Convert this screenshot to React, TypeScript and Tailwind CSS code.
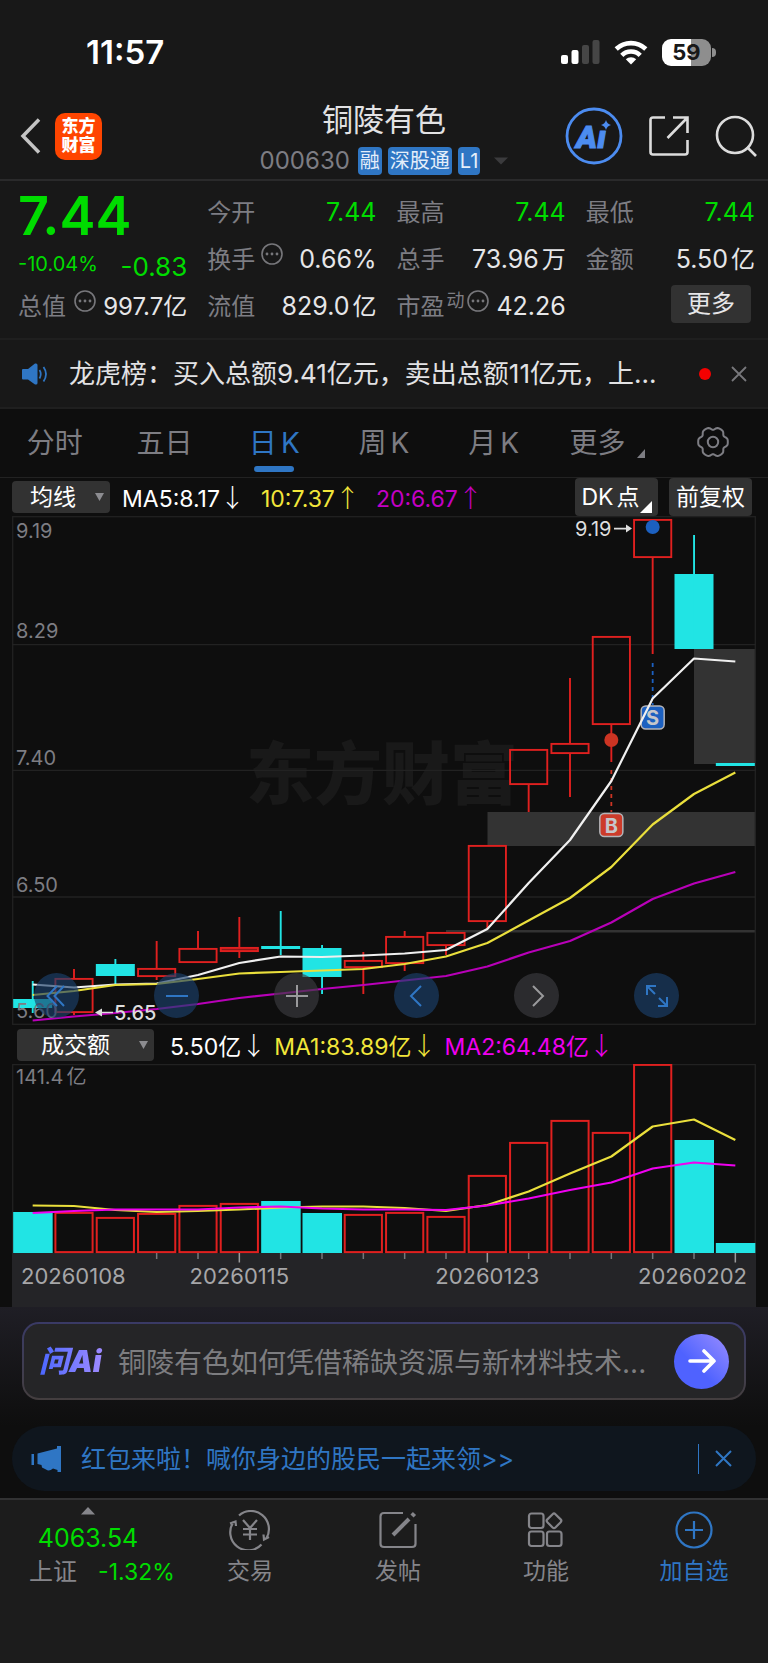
import React from "react";

const UP = "#e0201f";
const DOWN = "#21e4e4";

// Chart space: 744 units wide, 18 equal slots.
const SLOT = 744 / 18;
const cx = (i: number) => SLOT * i + SLOT / 2;
const BODY = 39;

type Candle = { up: boolean; top: number; bottom: number; high: number; low: number };

const candles: Candle[] = [
  { up: false, top: 483, bottom: 492, high: 465, low: 497 },
  { up: true, top: 462, bottom: 497, high: 453, low: 499 },
  { up: false, top: 448, bottom: 460, high: 443, low: 468 },
  { up: true, top: 452, bottom: 461, high: 425, low: 464 },
  { up: true, top: 432, bottom: 447, high: 415, low: 447 },
  { up: true, top: 431, bottom: 436, high: 401, low: 442 },
  { up: false, top: 430, bottom: 433, high: 395, low: 439 },
  { up: false, top: 432, bottom: 461, high: 429, low: 478 },
  { up: true, top: 444, bottom: 452, high: 436, low: 478 },
  { up: true, top: 420, bottom: 448, high: 415, low: 455 },
  { up: true, top: 416, bottom: 430, high: 416, low: 439 },
  { up: true, top: 329, bottom: 406, high: 329, low: 413 },
  { up: true, top: 233, bottom: 269, high: 233, low: 296 },
  { up: true, top: 227, bottom: 238, high: 162, low: 281 },
  { up: true, top: 120, bottom: 209, high: 120, low: 246 },
  { up: true, top: 3, bottom: 42, high: 3, low: 138 },
  { up: false, top: 58, bottom: 133, high: 19, low: 133 },
  { up: false, top: 247, bottom: 250, high: 247, low: 250 },
];

const ma5 = [468.5, 471.5, 468.5, 467.5, 459, 447, 440.5, 441, 439.5, 437.5, 434, 413, 367, 324, 265, 182.5, 142.5, 145.5];
const ma10 = [479, 475, 469, 468, 463, 457.5, 456, 454.5, 453, 448, 440.5, 427, 404.5, 382, 351, 308.5, 278, 256.5];
const ma20 = [504.5, 500.5, 497, 493, 488, 482, 477.5, 473, 469, 464.5, 460, 450.5, 436.5, 425, 406.5, 383, 367.5, 356];

const volumes: { up: boolean; top: number }[] = [
  { up: false, top: 148 },
  { up: true, top: 148 },
  { up: true, top: 153 },
  { up: true, top: 149 },
  { up: true, top: 141 },
  { up: true, top: 139 },
  { up: false, top: 137 },
  { up: false, top: 149 },
  { up: true, top: 150 },
  { up: true, top: 148 },
  { up: true, top: 152 },
  { up: true, top: 111 },
  { up: true, top: 78 },
  { up: true, top: 56 },
  { up: true, top: 68 },
  { up: true, top: 0 },
  { up: false, top: 76 },
  { up: false, top: 179 },
];
const volMa1 = [141.5, 142, 146, 148, 147, 145.5, 143.5, 142.5, 142.5, 144, 147, 141, 127.5, 109.5, 92.5, 62.5, 55.5, 76];
const volMa2 = [149, 147, 145.5, 145.5, 145.5, 143.5, 142.5, 144.5, 145.5, 145.5, 146, 141.5, 134.5, 126, 118.5, 104.5, 98.5, 101.5];

const toPoints = (ys: number[]) => ys.map((y, i) => `${cx(i)},${y}`).join(" ");

// Six-lobed outline of the settings icon, centred on (16, 16).
const gearPoints = Array.from({ length: 90 }, (_, k) => {
  const a = (k * Math.PI) / 45;
  const r = 13.9 + 1.3 * Math.cos(6 * a) - 0.4 * Math.cos(12 * a);
  return `${(16 + r * Math.cos(a)).toFixed(2)},${(16 + r * Math.sin(a)).toFixed(2)}`;
}).join(" ");

function StatusBar() {
  return (
    <div className="flex h-[102px] items-center justify-between pt-[2px] pl-[86px] pr-[52px] text-white">
      <div className="text-[33px] leading-10 font-semibold">11:57</div>
      <div className="flex items-center gap-[14px]">
        <svg width="39" height="25" viewBox="0 0 39 25" aria-hidden="true">
          <rect x="0" y="15" width="7" height="9" rx="2" fill="#fff" />
          <rect x="10.500" y="10" width="7" height="14" rx="2" fill="#fff" />
          <rect x="21" y="5" width="7" height="19" rx="2" fill="#464646" />
          <rect x="31.500" y="0" width="7" height="24" rx="2" fill="#464646" />
        </svg>
        <svg width="34" height="25" viewBox="0 0 34 25" aria-hidden="true">
          <path d="M17 24.500 L11.800 19.300 A7.400 7.400 0 0 1 22.200 19.300 Z" fill="#fff" />
          <path d="M7.800 15.300 A13 13 0 0 1 26.200 15.300" fill="none" stroke="#fff" strokeWidth="4.600" />
          <path d="M2.200 9 A21.500 21.500 0 0 1 31.800 9" fill="none" stroke="#fff" strokeWidth="4.600" />
        </svg>
        <div className="flex items-center gap-px">
          <div className="flex h-[27px] w-[49px] items-center justify-center rounded-[9px] bg-linear-to-r from-white from-59% to-[#8e8e8e] to-59% text-[22px] leading-none font-bold text-[#181818]">
            59
          </div>
          <div className="h-[9px] w-1 rounded-r-full bg-[#8e8e8e]" />
        </div>
      </div>
    </div>
  );
}

function Header() {
  return (
    <header className="grid h-[79px] grid-cols-[1fr_auto_1fr] items-start border-b-2 border-[#2a2a2b] px-[11px]">
      <div className="flex h-[68px] items-center gap-[14px] pl-[9px]">
        <button aria-label="返回">
          <svg width="21" height="36" viewBox="0 0 21 36" fill="none" stroke="#c4c4c4" strokeWidth="3.500">
            <path d="M19 1.500 L3 18 L19 34.500" />
          </svg>
        </button>
        <div className="flex h-[47px] w-[47px] flex-col items-center justify-center rounded-[10px] bg-[#ff4500] text-[17px] leading-[19px] font-black text-white">
          <span>东方</span>
          <span>财富</span>
        </div>
      </div>
      <div className="flex flex-col items-center">
        <h1 className="text-[31px] leading-9 font-normal text-[#e2e2e4]">铜陵有色</h1>
        <div className="mt-[9px] flex h-7 items-center gap-[6px] text-[20px] text-[#e4eefa]">
          <span className="mr-[2px] text-[24px] leading-none text-[#7d7d83]">000630</span>
          <span className="flex h-7 items-center rounded-[4px] bg-[#2f76c4] px-[2px]">融</span>
          <span className="flex h-7 items-center rounded-[4px] bg-[#2f76c4] px-[2px]">深股通</span>
          <span className="flex h-7 items-center rounded-[4px] bg-[#2f76c4] px-[2px]">L1</span>
          <svg className="ml-2" width="14" height="8" viewBox="0 0 14 8" aria-hidden="true">
            <path d="M0 0.500 H14 L7 7.500 Z" fill="#3b3b3d" />
          </svg>
        </div>
      </div>
      <div className="flex h-[68px] items-center justify-end gap-[26px]">
        <button aria-label="AI 助手">
          <svg width="58" height="58" viewBox="0 0 58 58">
            <circle cx="29" cy="29" r="27" fill="none" stroke="#4c8cf0" strokeWidth="2.800" />
            <text x="11" y="40.500" fontSize="32" fontWeight="900" fontStyle="italic" fill="#4c8cf0" stroke="#4c8cf0" strokeWidth="1" className="font-['Roboto',sans-serif]">
              Aı
            </text>
            <path d="M41 13 Q42 17 46 18 Q42 19 41 23 Q40 19 36 18 Q40 17 41 13 Z" fill="#4c8cf0" stroke="#181818" strokeWidth="1.500" paintOrder="stroke" />
          </svg>
        </button>
        <button aria-label="分享">
          <svg width="40" height="40" viewBox="0 0 40 40" fill="none" stroke="#dcdcdc" strokeWidth="2.600">
            <path d="M16 1.500 H4 Q1.500 1.500 1.500 4 V36 Q1.500 38.500 4 38.500 H36 Q38.500 38.500 38.500 36 V24" />
            <path d="M24 1.500 H38.500 V17 M38 2 L18.500 22" />
          </svg>
        </button>
        <button aria-label="搜索">
          <svg width="42" height="42" viewBox="0 0 42 42" fill="none" stroke="#dcdcdc" strokeWidth="2.600">
            <circle cx="20" cy="20" r="18" />
            <path d="M32 32 L41 41" />
          </svg>
        </button>
      </div>
    </header>
  );
}

function MoreDots() {
  return (
    <svg width="22" height="22" viewBox="0 0 22 22" className="shrink-0" aria-hidden="true">
      <circle cx="11" cy="11" r="10" fill="none" stroke="#77777b" strokeWidth="1.600" />
      <circle cx="6" cy="11" r="1.400" fill="#77777b" />
      <circle cx="11" cy="11" r="1.400" fill="#77777b" />
      <circle cx="16" cy="11" r="1.400" fill="#77777b" />
    </svg>
  );
}

function Stat({ label, value, unit, green, extra }: { label: string; value: string; unit?: string; green?: boolean; extra?: React.ReactNode }) {
  return (
    <div className="flex h-[47px] items-center justify-between whitespace-nowrap">
      <div className="flex items-center">
        <span className="text-[24px] text-[#7d7d83]">{label}</span>
        {extra}
      </div>
      <span className={green ? "text-[25px] text-[#00dc00]" : "text-[25px] text-[#e6e6e8]"}>
        {value}
        {unit && <span className="ml-[3px] text-[24px]">{unit}</span>}
      </span>
    </div>
  );
}

function Quote() {
  return (
    <section className="grid h-[159px] grid-cols-4 gap-x-5 border-b-2 border-[#1f1f1f] pt-2 pl-[18px] pr-[13px]">
      <div>
        <div className="flex h-[53px] items-center text-[54px] leading-none font-semibold text-[#00dc00]">7.44</div>
        <div className="flex h-[41px] items-center justify-between text-[#00dc00]">
          <span className="pt-[2px] text-[20px]">-10.04%</span>
          <span className="pt-2 text-[26px]">-0.83</span>
        </div>
        <div className="flex h-[47px] items-center justify-between text-[24px] whitespace-nowrap">
          <span className="text-[#7d7d83]">总值</span>
          <span className="mb-3"><MoreDots /></span>
          <span className="text-[#e6e6e8]">997.7亿</span>
        </div>
      </div>
      <div>
        <Stat label="今开" value="7.44" green />
        <Stat label="换手" value="0.66%" extra={<span className="mb-3 ml-[6px]"><MoreDots /></span>} />
        <Stat label="流值" value="829.0" unit="亿" />
      </div>
      <div>
        <Stat label="最高" value="7.44" green />
        <Stat label="总手" value="73.96" unit="万" />
        <Stat
          label="市盈"
          value="42.26"
          extra={
            <span className="mb-3 ml-[2px] flex items-center gap-[2px] text-[18px] leading-none text-[#7d7d83]">
              动<MoreDots />
            </span>
          }
        />
      </div>
      <div>
        <Stat label="最低" value="7.44" green />
        <Stat label="金额" value="5.50" unit="亿" />
        <div className="flex justify-end pt-[2px] pr-1">
          <button className="h-[38px] w-20 rounded-[4px] bg-[#323232] text-[24px] leading-none text-[#e6e6e8]">更多</button>
        </div>
      </div>
    </section>
  );
}

function News() {
  return (
    <section className="flex h-[69px] items-center border-b-2 border-[#1f1f1f] pr-[21px] pl-[22px]">
      <svg width="26" height="22" viewBox="0 0 26 22" aria-hidden="true">
        <path d="M0 7 Q0 6 1 6 H6 L13 0.600 Q15.500 0 15.500 2 V20 Q15.500 22 13 21.400 L6 16.500 H1 Q0 16.500 0 15.500 Z" fill="#2f76c4" />
        <path d="M17.500 7 Q20 11 17.500 15.500 M21.500 4 Q26.500 11 21.500 18.500" fill="none" stroke="#2f76c4" strokeWidth="1.800" />
      </svg>
      <a href="#news" className="ml-[21px] min-w-0 flex-1 truncate text-[26px] text-[#e2e2e4]">
        龙虎榜：买入总额9.41亿元，卖出总额11亿元，上...
      </a>
      <span className="mr-5 ml-4 size-3 rounded-full bg-[#f40000]" />
      <button aria-label="关闭">
        <svg width="16" height="16" viewBox="0 0 16 16" stroke="#77777b" strokeWidth="1.800">
          <path d="M1 1 L15 15 M15 1 L1 15" />
        </svg>
      </button>
    </section>
  );
}

function Tabs() {
  const tabs = [
    { zh: "分时" },
    { zh: "五日" },
    { zh: "日", latin: "K", active: true },
    { zh: "周", latin: "K" },
    { zh: "月", latin: "K" },
  ];
  return (
    <nav className="grid h-[69px] grid-cols-7 border-b border-[#222] text-[28px] text-[#7d7d83]">
      {tabs.map((t) => (
        <button key={t.zh} className={t.active ? "relative text-[#2f76c4]" : "relative"}>
          {t.zh}
          {t.latin && <span className="ml-1">{t.latin}</span>}
          {t.active && <span className="absolute bottom-[5px] left-1/2 h-[6px] w-10 -translate-x-1/2 rounded-full bg-[#2f76c4]" />}
        </button>
      ))}
      <button className="flex items-center justify-center gap-[12px] pl-[8px]">
        更多
        <svg className="mt-5" width="8" height="9" viewBox="0 0 8 9" aria-hidden="true">
          <path d="M8 0 V9 H0 Z" fill="#7d7d83" />
        </svg>
      </button>
      <button aria-label="设置" className="flex items-center justify-center pb-[2px]">
        <svg width="32" height="32" viewBox="0 0 32 32" fill="none" stroke="#7d7d83" strokeWidth="2">
          <polygon points={gearPoints} strokeLinejoin="round" />
          <circle cx="16" cy="16" r="5.200" />
        </svg>
      </button>
    </nav>
  );
}

function DropArrow() {
  return (
    <svg className="pointer-events-none absolute top-1/2 right-[6px] -translate-y-1/2" width="9" height="9" viewBox="0 0 9 9" aria-hidden="true">
      <path d="M0 0.500 H9 L4.500 8.500 Z" fill="#8c8c90" />
    </svg>
  );
}

function Arrow({ dir }: { dir: "up" | "down" }) {
  return <span className="font-['Noto_Sans_CJK_SC',sans-serif] text-[25px] leading-none font-light">{dir === "up" ? "↑" : "↓"}</span>;
}

function MaBar() {
  return (
    <div className="flex h-[38px] items-center pr-4 pl-3 text-[23px] leading-none whitespace-nowrap">
      <div className="relative">
        <select aria-label="均线指标" className="block h-8 w-[98px] appearance-none rounded-[4px] bg-[#323232] pl-[18px] text-white">
          <option>均线</option>
        </select>
        <DropArrow />
      </div>
      <span className="ml-3 text-white">MA5:8.17<Arrow dir="down" /></span>
      <span className="ml-4 text-[#f2e63a]">10:7.37<Arrow dir="up" /></span>
      <span className="ml-4 text-[#c400c4]">20:6.67<Arrow dir="up" /></span>
      <button className="relative ml-auto h-[38px] w-[83px] rounded-[4px] bg-[#323232] pr-3 text-white">
        DK<span className="ml-[3px]">点</span>
        <svg className="absolute right-[6px] bottom-[3px]" width="12" height="12" viewBox="0 0 12 12" aria-hidden="true">
          <path d="M12 0 V12 H0 Z" fill="#fff" />
        </svg>
      </button>
      <button className="ml-[11px] h-[38px] w-[83px] rounded-[4px] bg-[#323232] text-white">前复权</button>
    </div>
  );
}

function RoundButton({ label, blue, children }: { label: string; blue?: boolean; children: React.ReactNode }) {
  return (
    <button
      aria-label={label}
      className={
        blue
          ? "flex size-[45px] items-center justify-center rounded-full bg-[#1c406c]/65 text-[#2f76c4]"
          : "flex size-[45px] items-center justify-center rounded-full bg-[#3c3c40]/65 text-[#9a9a9c]"
      }
    >
      <svg width="24" height="24" viewBox="0 0 24 24" fill="none" stroke="currentColor" strokeWidth="2">
        {children}
      </svg>
    </button>
  );
}

function PriceChart() {
  return (
    <div className="relative mx-3">
      <svg viewBox="0 0 744 509" className="block w-full" role="img" aria-label="日K线图">
        <text x="234" y="283" fontSize="68" fontWeight="900" fill="#191919">东方财富</text>
        <g fill="#333">
          <rect x="682" y="133" width="62" height="115" />
          <rect x="475.500" y="296" width="268.500" height="34" />
          <rect x="434" y="414" width="310" height="2.500" />
        </g>
        <g stroke="#222" strokeWidth="1.300" fill="none">
          <rect x="0.700" y="0.700" width="742.600" height="507.600" />
          <path d="M0 128.700 H744 M0 254.300 H744 M0 381 H744" />
        </g>
        {candles.map((c, i) =>
          c.up ? (
            <g key={i} stroke={UP} strokeWidth="1.900" fill="none">
              <rect x={cx(i) - BODY / 2 + 0.9} y={c.top + 0.9} width={BODY - 1.8} height={c.bottom - c.top - 1.8} fill={c.bottom - c.top < 6 ? "#8a1718" : "none"} />
              <path d={`M${cx(i)} ${c.high} V${c.top} M${cx(i)} ${c.bottom} V${c.low}`} />
            </g>
          ) : (
            <g key={i} fill={DOWN}>
              <rect x={cx(i) - BODY / 2} y={c.top} width={BODY} height={c.bottom - c.top} />
              <rect x={cx(i) - 0.9} y={c.high} width="1.900" height={c.low - c.high} />
            </g>
          ),
        )}
        <circle cx={cx(15)} cy="11" r="7" fill="#1c60c0" />
        <path d={`M${cx(15)} 147 V189`} stroke="#1c60c0" strokeWidth="1.800" strokeDasharray="4 4" />
        <circle cx={cx(14)} cy="224" r="7" fill="#cc3423" />
        <path d={`M${cx(14)} 254 V296`} stroke="#cc3423" strokeWidth="1.800" strokeDasharray="4 4" />
        <g strokeWidth="1.500" stroke="#b4b4b8">
          <rect x={cx(15) - 11.5} y="190" width="23" height="23" rx="4.500" fill="#1c60c0" />
          <rect x={cx(14) - 11.5} y="297.500" width="23" height="23" rx="4.500" fill="#cc3b2a" />
        </g>
        <g fill="none" strokeWidth="2.200" strokeLinejoin="round">
          <polyline points={toPoints(ma5)} stroke="#f0f0f0" />
          <polyline points={toPoints(ma10)} stroke="#eadf3c" />
          <polyline points={toPoints(ma20)} stroke="#b800b8" />
        </g>
        <g fontSize="20" fontWeight="700" textAnchor="middle" fill="#c6c6ca">
          <text x={cx(15)} y="209">S</text>
          <text x={cx(14)} y="316.500">B</text>
        </g>
        <g fontSize="20" fill="#7d7d83">
          <text x="4" y="22">9.19</text>
          <text x="4" y="122">8.29</text>
          <text x="4" y="249">7.40</text>
          <text x="4" y="376">6.50</text>
          <text x="4" y="502">5.60</text>
        </g>
        <g fontSize="20" fill="#dedede">
          <text x="563" y="20">9.19</text>
          <text x="102" y="504" fontWeight="500">5.65</text>
          <path d="M602 11.800 H614 V8.500 L620 12.500 L614 16.500 V13.400 H602 Z" />
          <path d="M101 495.700 H90 V492.500 L83 496.500 L90 500.500 V497.300 H101 Z" />
        </g>
      </svg>
      <div className="absolute right-[77px] bottom-[7px] left-[22px] flex justify-between">
        <RoundButton label="最早" blue>
          <path d="M12 2 L2.500 12 L12 22 M19 2 L9.500 12 L19 22" />
        </RoundButton>
        <RoundButton label="缩小" blue>
          <path d="M1 12 H23" />
        </RoundButton>
        <RoundButton label="放大">
          <path d="M1 12 H23 M12 1 V23" />
        </RoundButton>
        <RoundButton label="左移" blue>
          <path d="M16 2 L6 12 L16 22" />
        </RoundButton>
        <RoundButton label="右移">
          <path d="M8 2 L18 12 L8 22" />
        </RoundButton>
        <RoundButton label="全屏" blue>
          <path d="M2 11 V2 H11 M2 2 L10 10 M22 13 V22 H13 M22 22 L14 14" />
        </RoundButton>
      </div>
    </div>
  );
}

function VolumeBar() {
  return (
    <div className="flex h-[39px] items-center pt-px pl-[17px] text-[23px] leading-none whitespace-nowrap">
      <div className="relative">
        <select aria-label="成交指标" className="block h-8 w-[137px] appearance-none rounded-[4px] bg-[#323232] pl-6 text-white">
          <option>成交额</option>
        </select>
        <DropArrow />
      </div>
      <span className="ml-4 text-white">5.50亿<Arrow dir="down" /></span>
      <span className="ml-2 text-[#f2e63a]">MA1:83.89亿<Arrow dir="down" /></span>
      <span className="ml-2 text-[#f000f0]">MA2:64.48亿<Arrow dir="down" /></span>
    </div>
  );
}

function VolumeChart() {
  const minor = [3, 4, 6, 7, 8, 9, 10, 12, 13, 14, 15, 16];
  const major = [5, 11, 17];
  return (
    <div className="mx-3">
      <svg viewBox="0 0 744 243" className="block w-full" role="img" aria-label="成交额">
        <rect x="0" y="189" width="744" height="54" fill="#242427" />
        <path d="M0.700 189 V0.700 H743.300 V189" stroke="#222" strokeWidth="1.300" fill="none" />
        <text x="4" y="20" fontSize="20" fill="#7d7d83">
          141.4<tspan dx="3">亿</tspan>
        </text>
        {volumes.map((v, i) =>
          v.up ? (
            <rect key={i} x={cx(i) - BODY / 2 + 0.9} y={v.top + 0.9} width={BODY - 1.8} height={187.2 - v.top} fill="none" stroke={UP} strokeWidth="2" />
          ) : (
            <rect key={i} x={cx(i) - BODY / 2} y={v.top} width={BODY + 0.5} height={189 - v.top} fill={DOWN} />
          ),
        )}
        <g fill="none" strokeWidth="2.200" strokeLinejoin="round">
          <polyline points={toPoints(volMa1)} stroke="#eadf3c" />
          <polyline points={toPoints(volMa2)} stroke="#f000f0" />
        </g>
        <g stroke="#77777b" strokeWidth="1.500">
          {minor.map((i) => (
            <path key={i} d={`M${cx(i)} 189 V195`} />
          ))}
          {major.map((i) => (
            <path key={i} d={`M${cx(i)} 189 V198.500`} stroke="#9a9a9c" />
          ))}
        </g>
        <g fontSize="22" fill="#a6a6a8">
          <text x="9" y="220">20260108</text>
          <text x={cx(5)} y="220" textAnchor="middle">20260115</text>
          <text x={cx(11)} y="220" textAnchor="middle">20260123</text>
          <text x="735" y="220" textAnchor="end">20260202</text>
        </g>
      </svg>
    </div>
  );
}

function AskAi() {
  return (
    <div className="bg-linear-to-b from-[#1f1e25] to-[#0e0e0e] px-[22px] pt-[15px] pb-[26px]">
      <div className="rounded-[17px] bg-linear-to-b from-[#3a3a66] to-[#443e3f] p-[2px]">
        <form className="flex h-[74px] items-center rounded-[15px] bg-[#252527] px-[15px]" onSubmit={(e) => e.preventDefault()}>
          <span className="w-[68px] bg-linear-to-r from-[#4a66ff] to-[#a48cff] bg-clip-text text-[30px] leading-10 font-black whitespace-nowrap text-transparent italic">问Ai</span>
          <input
            aria-label="提问"
            placeholder="铜陵有色如何凭借稀缺资源与新材料技术..."
            className="ml-[11px] min-w-0 flex-1 bg-transparent pt-[3px] text-[28px] text-[#e6e6e8] outline-none placeholder:text-[#7d7d80]"
          />
          <button aria-label="发送" className="ml-4 flex size-[55px] items-center justify-center rounded-full bg-linear-to-tr from-[#4f62ff] from-40% to-[#9a8cff]">
            <svg width="28" height="24" viewBox="0 0 28 24" fill="none" stroke="#fff" strokeWidth="3.600" strokeLinecap="round" strokeLinejoin="round">
              <path d="M2 12 H26 M16 2 L26 12 L16 22" />
            </svg>
          </button>
        </form>
      </div>
    </div>
  );
}

function Banner() {
  return (
    <div className="mx-3 mb-[7px] flex h-[65px] items-center rounded-full bg-[#0f161e] pr-6 pl-[19px] text-[#2f76c4]">
      <svg width="31" height="26" viewBox="0 0 31 26" fill="currentColor" aria-hidden="true">
        <path d="M0.500 8 H3 V19 H0.500 Z M6.500 7.500 L26 2.500 V0 H30 V26 H26.500 V24 L22 22.500 Q18 26 15 23.500 L11 21.500 L10.500 19 L6.500 18 Z" />
      </svg>
      <a href="#bonus" className="ml-[19px] flex-1 pt-[2px] text-[25px]">红包来啦！喊你身边的股民一起来领&gt;&gt;</a>
      <span className="h-[30px] w-px bg-[#2f76c4]" />
      <button aria-label="关闭横幅" className="ml-4">
        <svg width="17" height="17" viewBox="0 0 17 17" stroke="currentColor" strokeWidth="2">
          <path d="M1 1 L16 16 M16 1 L1 16" />
        </svg>
      </button>
    </div>
  );
}

function NavItem({ label, blue, children }: { label: string; blue?: boolean; children: React.ReactNode }) {
  return (
    <button className={blue ? "flex flex-col items-center pt-[10px] text-[#2f76c4]" : "flex flex-col items-center pt-[10px] text-[#85858a]"}>
      <svg width="44" height="40" viewBox="0 0 44 40" fill="none" stroke="currentColor" strokeWidth="2.200">
        {children}
      </svg>
      <span className="mt-[5px] text-[23px] leading-8">{label}</span>
    </button>
  );
}

function BottomNav() {
  return (
    <nav className="grid h-[165px] grid-cols-[176fr_148fr_148fr_148fr_148fr] content-start border-t-2 border-[#323233] bg-[#1c1c1c]">
      <button className="flex flex-col items-center pt-[7px]">
        <svg width="14" height="8" viewBox="0 0 14 8" aria-hidden="true">
          <path d="M7 0 L14 7.500 H0 Z" fill="#85858a" />
        </svg>
        <span className="mt-[7px] text-[25px] leading-8 text-[#00dc00]">4063.54</span>
        <span className="flex gap-[21px] pl-[28px] text-[24px] leading-9 whitespace-nowrap text-[#85858a]">
          上证 <span className="text-[23px] text-[#00dc00]">-1.32%</span>
        </span>
      </button>
      <NavItem label="交易">
        <path d="M11 5.500 A18 18 0 0 1 38.500 28 M41 27 L36 29.500 L35.500 24.500" />
        <path d="M33.500 34.500 A18 18 0 0 1 5.500 12 M2 13.500 L7.500 11.500 L8 16" />
        <path d="M15 10 L22 18 L29 10 M15 19 H29 M15 24.500 H29 M22 18 V30" />
      </NavItem>
      <NavItem label="发帖">
        <path d="M27 3 H8 Q4.500 3 4.500 6.500 V34 Q4.500 37 8 37 H36 Q39.500 37 39.500 34 V14" />
        <path d="M17 25 L33 9" strokeWidth="4" />
        <path d="M36 6 L38.500 3.500" strokeWidth="4.500" />
      </NavItem>
      <NavItem label="功能">
        <rect x="5" y="3.500" width="14.500" height="14.500" rx="2.500" />
        <rect x="5" y="21.500" width="14.500" height="14.500" rx="2.500" />
        <rect x="23" y="21.500" width="14.500" height="14.500" rx="2.500" />
        <rect x="24.300" y="5.100" width="11.400" height="11.400" rx="2" transform="rotate(45 30 10.800)" />
      </NavItem>
      <NavItem label="加自选" blue>
        <circle cx="22" cy="20" r="17.500" />
        <path d="M13 20 H31 M22 11 V29" />
      </NavItem>
    </nav>
  );
}

export default function App() {
  return (
    <div className="min-h-screen bg-[#0e0e0e] font-['Inter','Noto_Sans_CJK_SC',sans-serif]">
      <div className="bg-[#181818]">
        <StatusBar />
        <Header />
        <Quote />
        <News />
      </div>
      <Tabs />
      <MaBar />
      <PriceChart />
      <VolumeBar />
      <VolumeChart />
      <AskAi />
      <Banner />
      <BottomNav />
    </div>
  );
}
